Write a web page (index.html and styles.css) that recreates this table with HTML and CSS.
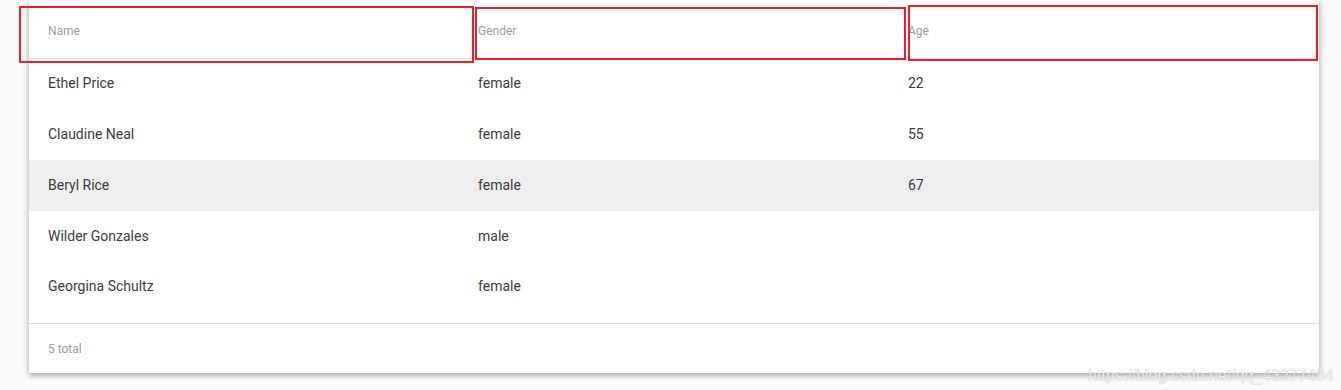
FILE: index.html
```html
<!DOCTYPE html>
<html lang="en">
<head>
    <meta charset="UTF-8">
    <meta name="viewport" content="width=device-width, initial-scale=1.0">
    <title>Users</title>
    <link rel="stylesheet" href="styles.css">
</head>
<body>

<div class="page">
    <div class="card">
        <table class="data-table">
            <colgroup>
                <col class="col">
                <col class="col">
                <col class="col">
            </colgroup>
            <thead>
                <tr>
                    <th>Name</th>
                    <th>Gender</th>
                    <th>Age</th>
                </tr>
            </thead>
            <tbody>
                <tr><td>Ethel Price</td><td>female</td><td>22</td></tr>
                <tr><td>Claudine Neal</td><td>female</td><td>55</td></tr>
                <tr class="hover"><td>Beryl Rice</td><td>female</td><td>67</td></tr>
                <tr><td>Wilder Gonzales</td><td>male</td><td></td></tr>
                <tr><td>Georgina Schultz</td><td>female</td><td></td></tr>
            </tbody>
        </table>
        <div class="footer">5 total</div>
    </div>

    <!-- marked header cells -->
    <div class="mark mark-name"></div>
    <div class="mark mark-gender"></div>
    <div class="mark mark-age"></div>

    <div class="watermark">https://blog.csdn.net/qq_43277404</div>
</div>

</body>
</html>
```

FILE: styles.css
```css
html, body {
    margin: 0;
    background-color: #FAFAFA;
}
.page {
    position: relative;
    height: 390px;
    padding-left: 29px;
    font-family: Roboto, "Noto Sans", sans-serif;
    overflow: hidden;
}
.card {
    width: 1290px;
    background-color: #FFFFFF;
    box-shadow: 0 3px 5px rgba(0, 0, 0, 0.25), 0 0 9px rgba(0, 0, 0, 0.12);
}
.data-table {
    width: 100%;
    table-layout: fixed;
    border-collapse: collapse;
    border-bottom: 1px solid #E0E0E0;
}
.data-table .col {
    width: 430px;
}
.data-table th {
    height: 58px;
    padding: 5px 0 0 19px;
    box-sizing: border-box;
    text-align: left;
    font-size: 12px;
    font-weight: normal;
    color: #9E9E9E;
    border-bottom: 1px solid #E0E0E0;
}
.data-table td {
    height: 51px;
    padding: 0 0 2px 19px;
    box-sizing: border-box;
    font-size: 14px;
    color: #3C3C3C;
}
.data-table tbody tr:last-child td {
    height: 61px;
    padding-bottom: 12px;
}
.data-table tr.hover td {
    background-color: #EEEEEE;
}
.footer {
    height: 49px;
    line-height: 51px;
    padding-left: 19px;
    font-size: 12px;
    color: #9E9E9E;
}
.mark {
    position: absolute;
    border: 2px solid #E8202A;
    box-sizing: border-box;
}
.mark-name {
    left: 19px;
    top: 6px;
    width: 455px;
    height: 57px;
}
.mark-gender {
    left: 475px;
    top: 7px;
    width: 431px;
    height: 53px;
}
.mark-age {
    left: 908px;
    top: 5px;
    width: 410px;
    height: 56px;
}
.watermark {
    position: absolute;
    left: 1088px;
    top: 367px;
    font-family: "Liberation Sans", Arial, sans-serif;
    font-size: 16px;
    color: rgba(255, 255, 255, 0.85);
    text-shadow: 0 0 1px rgba(0, 0, 0, 0.35);
    white-space: nowrap;
}
```
